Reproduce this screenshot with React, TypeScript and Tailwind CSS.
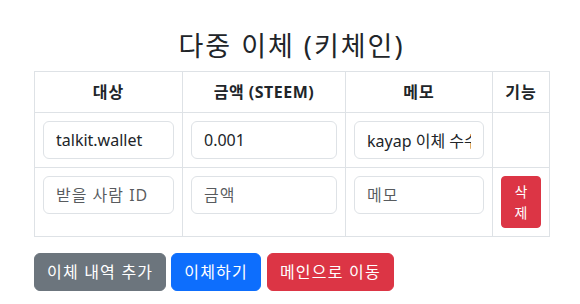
import { useState } from "react"

type Row = { to: string; amount: string; memo: string }

const font = { fontFamily: '"Noto Sans", "Noto Sans CJK KR", sans-serif' }

export default function App() {
  const [rows] = useState<Row[]>([
    { to: "talkit.wallet", amount: "0.001", memo: "kayap 이체 수수료" },
    { to: "", amount: "", memo: "" },
  ])

  const inputCls =
    "block w-full h-[38px] px-3 py-1.5 text-base leading-6 text-[#212529] bg-white border border-[#dee2e6] rounded-md outline-none placeholder:text-[#212529bf]"

  return (
    <div className="min-h-screen bg-white text-[#212529]" style={font}>
      <div className="pt-[30px] pl-[34px]">
        <h2 className="w-[515px] text-center text-[27px] leading-[1.2] tracking-[2px] font-normal mb-[9px]">
          다중 이체 (키체인)
        </h2>

        {/* 이체 테이블 */}
        <table className="w-[515px] table-fixed border-collapse text-base leading-6">
          <colgroup>
            <col className="w-[148px]" />
            <col className="w-[163px]" />
            <col className="w-[147px]" />
            <col className="w-[57px]" />
          </colgroup>
          <thead>
            <tr>
              <th className="border border-[#dee2e6] p-2 font-bold text-center tracking-[1px]">대상</th>
              <th className="border border-[#dee2e6] p-2 font-bold text-center tracking-[0.5px]">금액 (STEEM)</th>
              <th className="border border-[#dee2e6] p-2 font-bold text-center tracking-[1px]">메모</th>
              <th className="border border-[#dee2e6] p-2 font-bold text-center tracking-[1px]">기능</th>
            </tr>
          </thead>
          <tbody>
            {rows.map((r, i) => (
              <tr key={i}>
                <td className="border border-[#dee2e6] p-2 align-top">
                  <input className={inputCls + (i > 0 ? " tracking-[1px]" : "")} defaultValue={r.to} placeholder="받을 사람 ID" style={font} />
                </td>
                <td className="border border-[#dee2e6] p-2 align-top">
                  <input className={inputCls + (i > 0 ? " tracking-[1px]" : "")} defaultValue={r.amount} placeholder="금액" style={font} />
                </td>
                <td className="border border-[#dee2e6] p-2 align-top">
                  <input className={inputCls + (i > 0 ? " tracking-[1px]" : "")} defaultValue={r.memo} placeholder="메모" style={font} />
                </td>
                <td className="border border-[#dee2e6] p-2 align-top">
                  {i > 0 && (
                    <button
                      className="w-full px-2 py-1 text-sm leading-[21px] text-white bg-[#dc3545] border border-[#dc3545] rounded"
                      style={font}
                    >
                      삭제
                    </button>
                  )}
                </td>
              </tr>
            ))}
          </tbody>
        </table>

        {/* 하단 버튼 */}
        <div className="flex gap-[5px] mt-4">
          <button className="h-[38px] px-3 text-base leading-6 tracking-[1.2px] text-white bg-[#6c757d] border border-[#6c757d] rounded-md" style={font}>
            이체 내역 추가
          </button>
          <button className="h-[38px] px-3 text-base leading-6 tracking-[1.2px] text-white bg-[#0d6efd] border border-[#0d6efd] rounded-md" style={font}>
            이체하기
          </button>
          <button className="h-[38px] px-3 text-base leading-6 tracking-[1.2px] text-white bg-[#dc3545] border border-[#dc3545] rounded-md ml-[1px]" style={font}>
            메인으로 이동
          </button>
        </div>
      </div>
    </div>
  )
}
